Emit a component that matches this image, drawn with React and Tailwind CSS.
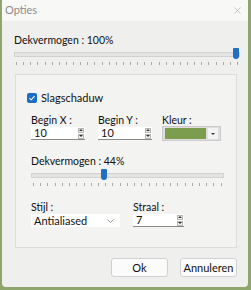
import { X } from "lucide-react";

function Ticks({ count }) {
  return (
    <div className="flex justify-between h-[3px]">
      {Array.from({ length: count }).map((_, i) => (
        <div key={i} className="w-px h-[3px] bg-[#a8a8a8]" />
      ))}
    </div>
  );
}

function Slider({ pos, ticks }) {
  return (
    <div>
      <div className="relative h-[12px] flex items-center">
        <div className="w-full h-[5px] bg-[#e4e4e4] border border-[#d2d2d2]" />
        <div
          className="absolute top-0 w-[6px] h-[11px] bg-[#1f6fc2] rounded-b-[3px] rounded-t-[1px]"
          style={{ left: pos }}
        />
      </div>
      <div className="mt-[2px] px-[2px]">
        <Ticks count={ticks} />
      </div>
    </div>
  );
}

function Spin() {
  return (
    <div className="flex flex-col gap-[1px] mr-[1px]">
      <div className="w-[6px] h-[5px] border border-[#b5b5b5] bg-[#f4f4f4] flex items-center justify-center">
        <div className="w-0 h-0 border-l-[2px] border-r-[2px] border-b-[2px] border-l-transparent border-r-transparent border-b-[#333]" />
      </div>
      <div className="w-[6px] h-[5px] border border-[#b5b5b5] bg-[#f4f4f4] flex items-center justify-center">
        <div className="w-0 h-0 border-l-[2px] border-r-[2px] border-t-[2px] border-l-transparent border-r-transparent border-t-[#333]" />
      </div>
    </div>
  );
}

function NumberInput({ value, width }) {
  return (
    <div className={`${width} h-[13px] bg-white border-b border-[#8a8a8a] flex items-center justify-between pl-[3px] overflow-hidden`}>
      <span className="leading-[12px] text-[11px]">{value}</span>
      <Spin />
    </div>
  );
}

export default function App() {
  return (
    <div
      className="w-[251px] h-[290px] bg-[#8ea56c] pl-[2px] pr-[3px] pb-[3px] text-[10.5px] text-[#111]"
      style={{ fontFamily: 'Lato, "Noto Sans", sans-serif' }}
    >
      <div className="h-full flex flex-col bg-[#efefee] rounded-b-[4px] overflow-hidden">
        {/* title bar */}
        <div className="h-[21px] bg-[#f8f8f7] flex items-center justify-between pl-[3px] pr-[5px] shrink-0">
          <span className="text-[#8c8c8c] text-[11px]">Opties</span>
          <X size={11} strokeWidth={1.2} className="text-[#9a9a9a]" />
        </div>

        {/* global opacity */}
        <div className="pl-[12px] pr-[8px] pt-[12px]">
          <div className="leading-[14px]">Dekvermogen : 100%</div>
          <div className="mt-[1px]">
            <Slider pos={219} ticks={32} />
          </div>
        </div>

        {/* drop shadow panel */}
        <div className="mt-[9px] ml-[13px] mr-[11px] h-[174px] border border-[#dcdcdb] bg-[#f3f3f2] pl-[11px] pr-[12px] pt-[16px]">
          <div className="flex items-center gap-[4px] leading-[14px]">
            <div className="w-[10px] h-[10px] rounded-[2px] bg-[#1c6ec4] flex items-center justify-center">
              <svg width="8" height="8" viewBox="0 0 8 8">
                <path d="M1.5 4.2 L3.2 5.8 L6.6 2.2" fill="none" stroke="white" strokeWidth="1.1" />
              </svg>
            </div>
            <span className="text-[11px]">Slagschaduw</span>
          </div>

          <div className="flex pl-[4px] mt-[8px]">
            <div className="w-[54px]">
              <div className="leading-[14px]">Begin X :</div>
              <NumberInput value="10" width="w-[54px]" />
            </div>
            <div className="w-[54px] ml-[13px]">
              <div className="leading-[14px]">Begin Y :</div>
              <NumberInput value="10" width="w-[54px]" />
            </div>
            <div className="ml-[10px]">
              <div className="leading-[14px]">Kleur :</div>
              <div className="w-[59px] h-[15px] -mt-[1px] bg-[#dedede] border border-[#cbcbcb] flex items-center pl-[2px] pr-[2px] gap-[2px]">
                <div className="w-[41px] h-[11px] bg-[#7c9c4e]" />
                <div className="flex-1 h-[11px] bg-[#f3f3f3] flex items-center justify-center">
                  <div className="w-0 h-0 border-l-[2px] border-r-[2px] border-t-[2px] border-l-transparent border-r-transparent border-t-[#333]" />
                </div>
              </div>
            </div>
          </div>

          <div className="pl-[4px] mt-[13px]">
            <div className="leading-[14px]">Dekvermogen : 44%</div>
            <div className="mt-[1px]">
              <Slider pos={70} ticks={27} />
            </div>
          </div>

          <div className="flex pl-[4px] mt-[14px]">
            <div className="w-[89px]">
              <div className="leading-[14px]">Stijl :</div>
              <div className="h-[13px] bg-white flex items-center justify-between pl-[3px] pr-[6px]">
                <span className="leading-[12px] text-[11px]">Antialiased</span>
                <svg width="7" height="4" viewBox="0 0 7 4">
                  <path d="M0.5 0.5 L3.5 3.5 L6.5 0.5" fill="none" stroke="#8a8a8a" strokeWidth="0.9" />
                </svg>
              </div>
            </div>
            <div className="w-[51px] ml-[13px]">
              <div className="leading-[14px]">Straal :</div>
              <NumberInput value="7" width="w-[51px]" />
            </div>
          </div>
        </div>

        {/* buttons */}
        <div className="flex justify-end gap-[12px] pr-[11px] mt-[10px]">
          <button className="w-[57px] h-[19px] bg-[#fbfbfb] border border-[#d0d0d0] rounded-[3px] text-[11px] leading-[14px]">
            Ok
          </button>
          <button className="w-[57px] h-[19px] bg-[#fbfbfb] border border-[#d0d0d0] rounded-[3px] text-[11px] leading-[14px]">
            Annuleren
          </button>
        </div>
      </div>
    </div>
  );
}
